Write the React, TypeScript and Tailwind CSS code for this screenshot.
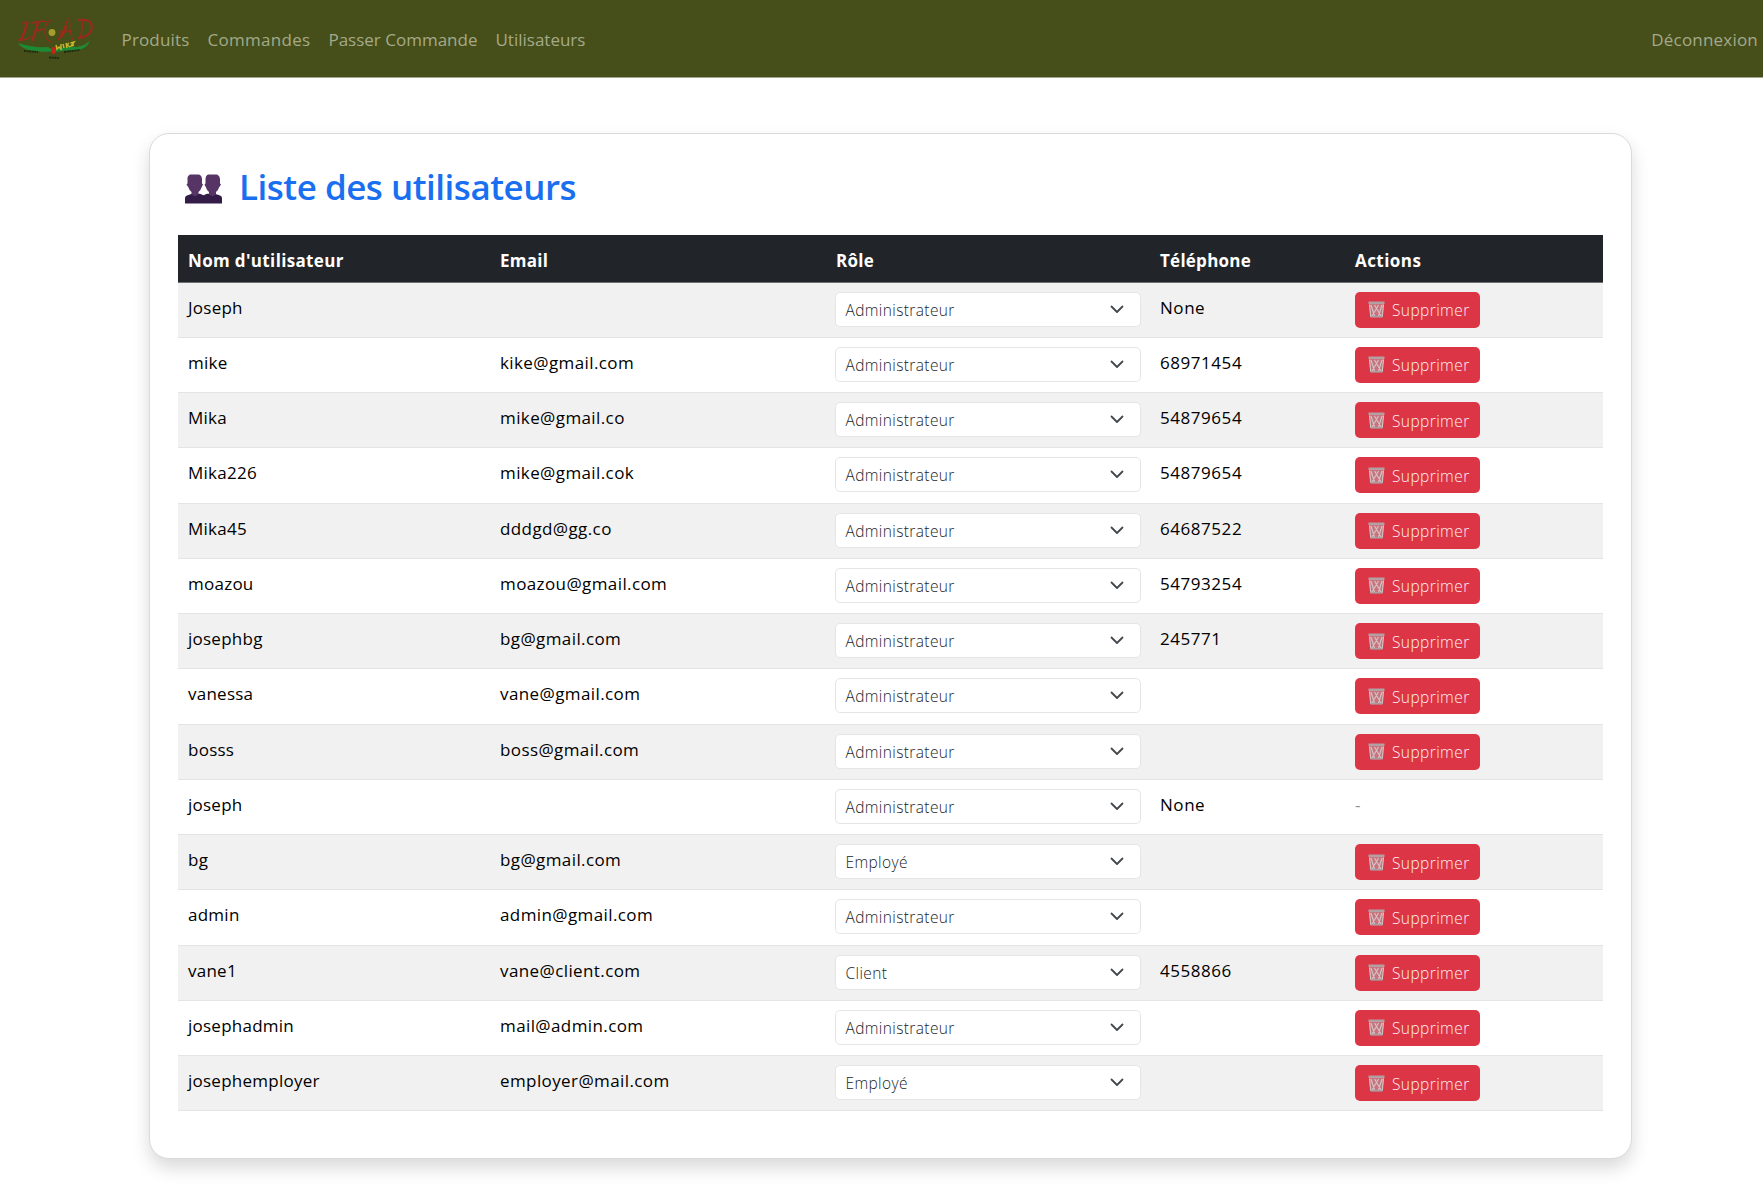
type User = { name: string; email: string; role: string; phone: string; locked?: boolean };

const users: User[] = [
  { name: "Joseph", email: "", role: "Administrateur", phone: "None" },
  { name: "mike", email: "kike@gmail.com", role: "Administrateur", phone: "68971454" },
  { name: "Mika", email: "mike@gmail.co", role: "Administrateur", phone: "54879654" },
  { name: "Mika226", email: "mike@gmail.cok", role: "Administrateur", phone: "54879654" },
  { name: "Mika45", email: "dddgd@gg.co", role: "Administrateur", phone: "64687522" },
  { name: "moazou", email: "moazou@gmail.com", role: "Administrateur", phone: "54793254" },
  { name: "josephbg", email: "bg@gmail.com", role: "Administrateur", phone: "245771" },
  { name: "vanessa", email: "vane@gmail.com", role: "Administrateur", phone: "" },
  { name: "bosss", email: "boss@gmail.com", role: "Administrateur", phone: "" },
  { name: "joseph", email: "", role: "Administrateur", phone: "None", locked: true },
  { name: "bg", email: "bg@gmail.com", role: "Employé", phone: "" },
  { name: "admin", email: "admin@gmail.com", role: "Administrateur", phone: "" },
  { name: "vane1", email: "vane@client.com", role: "Client", phone: "4558866" },
  { name: "josephadmin", email: "mail@admin.com", role: "Administrateur", phone: "" },
  { name: "josephemployer", email: "employer@mail.com", role: "Employé", phone: "" },
];

const columns = "grid grid-cols-[312px_336px_324px_195px_1fr] pl-[10px]";

function Logo() {
  return (
    <svg width="78" height="46" viewBox="0 0 78 46" className="ml-4 shrink-0" fill="none">
      <g stroke="#9c2a1c" strokeLinecap="round">
        <path d="M6 8.500 Q10 6 13 8 M3 25 Q9 26 14 22" strokeWidth="1.400" />
        <path d="M10.500 8 Q10 15 5 24.500" strokeWidth="2.600" />
        <path d="M16 8 Q23 5.500 30 6.500 M19 16 L28 14" strokeWidth="1.500" />
        <path d="M22 7.500 Q20 16 16.500 25" strokeWidth="2.400" />
        <path d="M35 5 Q28 9 29 19 Q30 25 35 27" strokeWidth="1.200" />
        <path d="M52 3 Q49 14 42 25 M44 17 L55 16" strokeWidth="1.400" />
        <path d="M50 12 Q48 18 45 22" strokeWidth="2.400" />
        <path d="M54 8 Q53 18 57 25" strokeWidth="1" />
        <path d="M62 5 Q75 3 76 12 Q75 22 62 23" strokeWidth="2" />
        <path d="M66 5 Q67 14 64 23" strokeWidth="1.400" />
      </g>
      <circle cx="36" cy="17.500" r="3.400" fill="#a99d2a" />
      <path d="M2 28 Q16 33 32 32 L37 35 Q51 31 61 32 Q71 30 74 25 Q72 33 62 35 Q50 35 38 37 L35 36.500 Q8 38 2 28Z" fill="#1d8a35" />
      <ellipse cx="37.500" cy="35.500" rx="2.200" ry="3.400" fill="#c3261d" />
      <path d="M40 30 L41 34 L43 32 L45 34 L45 29 M47 29 L48 33 M50 28 L51 33 M50 31 L53 28 M51 30 L54 32 M54.500 28 L58 27 L55 31 L58 30" stroke="#c4b728" strokeWidth="1.500" />
      <path d="M8 36 L22 37 M48 37 L64 35 M33 42.500 L43 43" stroke="#1d2a10" strokeWidth="1.800" strokeDasharray="2 .6" />
    </svg>
  );
}

function UsersIcon() {
  return (
    <svg width="37" height="30" viewBox="0 0 37 30" className="mt-[4px] shrink-0">
      <path d="M0 29.500V24q0-2 2-2.500l5-1.800h8l3.500 1.500 3.500-1.500h8l5 1.800q2 .5 2 2.500v5.500z" fill="#331c48" />
      <path d="M5 .5h9q3 1 3 5v4l1 1-1.500 3q-.8 3-3 4.500v2.500l-3.500 2-3.500-2V18q-2.200-1.500-3-4.500l-2-3 1-1v-4Q2 2 5 .5z" fill="#563466" />
      <path d="M23 .5h9q3 1.500 3 5v4l1 1-2 3q-.8 3-3 4.500v2.500l-3.500 2-3.500-2V18q-2.200-1.500-3-4.500l-1.500-3 1-1v-4q0-4 2.500-5z" fill="#563466" />
    </svg>
  );
}

function TrashIcon() {
  return (
    <svg width="17" height="17" viewBox="0 0 17 17" className="shrink-0" fill="none">
      <path d="M1 2H16L14.500 16H2.500Z" fill="#c8747d" />
      <path d="M1.500 3.500L2.800 16M14.200 16L15.500 3.500M3 4L6.500 15M6.500 4L13 15M10.500 4L4 15M14 4L10.500 15" stroke="#d3c0c3" strokeWidth="1.200" />
      <path d="M.5 .5H16.500V3H.5Z" fill="#b3a0a3" />
      <path d="M2.500 15.800H14.500" stroke="#aaa0a3" strokeWidth="1.600" />
    </svg>
  );
}

function RoleSelect({ value }: { value: string }) {
  return (
    <button type="button" className="-ml-px mt-[9px] flex h-[35px] w-[306px] items-center justify-between rounded-[5px] border border-[#e3e6e9] bg-white pl-[9.500px] pr-[16px] text-[15.500px] text-[#212529]">
      <span className="pt-px font-light tracking-[0.38px]">{value}</span>
      <svg width="14" height="9" viewBox="0 0 14 9" fill="none" className="shrink-0">
        <path d="M1.500 1.500L7 7L12.500 1.500" stroke="#43484d" strokeWidth="1.800" strokeLinecap="round" strokeLinejoin="round" />
      </svg>
    </button>
  );
}

export default function App() {
  return (
    <div className="h-[1185px] overflow-hidden bg-white font-['Open_Sans','Noto_Sans',sans-serif] text-black">
      <nav className="flex h-[77.500px] items-center border-b border-[#a3a78c] bg-[#464f19] text-[17px] text-[#a4a98b]">
        <Logo />
        <div className="ml-[27.500px] flex flex-1 items-center gap-[18px] pt-[3px]">
          <a className="tracking-[0.15px]">Produits</a>
          <a className="tracking-[0.3px]">Commandes</a>
          <a>Passer Commande</a>
          <a>Utilisateurs</a>
          <a className="ml-auto mr-[5px] tracking-[0.2px]">Déconnexion</a>
        </div>
      </nav>
      <main className="ml-[149px] mt-[55.500px] h-[1026px] w-[1483px] rounded-[20px] border border-[#d8dadc] bg-white px-[28px] pt-[27px] shadow-[0_9px_18px_rgba(0,0,0,0.15)]">
        <h1 className="flex h-[52px] items-center gap-[17px] pl-[7px] text-[35px] font-semibold text-[#1a6ff0]">
          <UsersIcon />
          <span className="tracking-[-0.500px]">Liste des utilisateurs</span>
        </h1>
        <section className="mt-[21.500px] w-[1425px]">
          <div className={`${columns} h-[48px] items-center border-b border-[#6d7073] bg-[#212529] pt-[5px] text-[17px] font-bold tracking-[0.250px] text-white`}>
            <span className="tracking-[0.350px]">Nom d'utilisateur</span>
            <span>Email</span>
            <span>Rôle</span>
            <span>Téléphone</span>
            <span className="tracking-[0.450px]">Actions</span>
          </div>
          {users.map((user) => (
            <div key={user.name} className={`${columns} h-[55.270px] border-b border-[#e2e5e8] text-[17px] leading-[28px] odd:bg-white even:bg-[#f1f1f1]`}>
              <span className="pt-[11px] tracking-[0.250px]">{user.name}</span>
              <span className="pt-[11px] tracking-[0.400px]">{user.email}</span>
              <RoleSelect value={user.role} />
              <span className="pt-[11px] tracking-[0.550px]">{user.phone}</span>
              {user.locked ? (
                <span className="pt-[11px] text-[#8b9094]">-</span>
              ) : (
                <button type="button" className="mt-[9px] flex h-[36px] w-[125px] items-center gap-[7px] rounded-[5px] bg-[#dc3545] pl-[13px] text-[15.500px] font-light tracking-[0.420px] text-[#fff0f2]">
                  <TrashIcon />
                  <span className="pt-px">Supprimer</span>
                </button>
              )}
            </div>
          ))}
        </section>
      </main>
    </div>
  );
}
